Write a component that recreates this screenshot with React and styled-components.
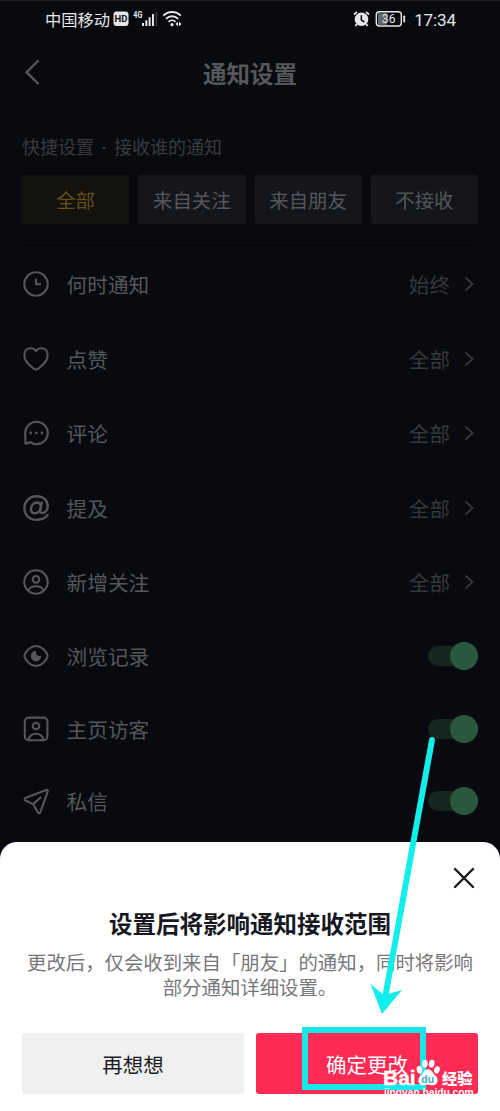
import styled, { createGlobalStyle } from "styled-components";

const GlobalStyle = createGlobalStyle`
  * {
    box-sizing: border-box;
  }

  body {
    margin: 0;
    font-family: "Noto Sans CJK SC", "Noto Sans", sans-serif;
  }
`;

const Phone = styled.div`
  position: relative;
  display: flex;
  flex-direction: column;
  width: 500px;
  height: 1111px;
  overflow: hidden;
  background: #090a0f;
  border-top: 1px solid #1b1d20;
`;

const StatusBar = styled.div`
  display: flex;
  align-items: center;
  justify-content: space-between;
  height: 36px;
  padding: 0 44px 0 45px;
  color: #e6e6e9;
  font-size: 16.3px;
  line-height: 36px;
`;

const StatusGroup = styled.div`
  display: flex;
  align-items: center;
  height: 36px;
`;

const Clock = styled.span`
  margin-left: 7px;
  padding-top: 1px;
  font-family: Roboto, "Noto Sans", sans-serif;
  font-size: 17px;
  letter-spacing: -0.1px;
`;

const NavBar = styled.div`
  display: grid;
  grid-template-columns: 40px 1fr 40px;
  align-items: center;
  height: 72px;
  padding: 0 22px;
`;

const NavTitle = styled.h1`
  margin: 0;
  color: #56575b;
  font-size: 23.5px;
  font-weight: 700;
  line-height: 34px;
  text-align: center;
`;

const SectionLabel = styled.div`
  height: 66px;
  padding: 24px 22px 0;
  color: #393a3f;
  font-size: 18px;
  line-height: 27px;
  white-space: pre;
`;

const Dot = styled.span`
  display: inline-block;
  width: 20px;
  font-family: "Noto Sans", sans-serif;
  text-align: center;
`;

const Chips = styled.div`
  display: grid;
  grid-template-columns: repeat(4, 1fr);
  gap: 9px;
  margin: 0 22px;
  padding-bottom: 18px;
  border-bottom: 1px solid #0f1015;
`;

const Chip = styled.button`
  height: 49px;
  padding: 0 0 1px;
  border: none;
  border-radius: 2px;
  background: ${(p) => (p.$active ? "#14120d" : "#15161b")};
  color: ${(p) => (p.$active ? "#64501c" : "#55565b")};
  font-family: inherit;
  font-size: 19.4px;
`;

const List = styled.div`
  padding: 4px 22px 0;
`;

const Row = styled.div`
  display: flex;
  align-items: center;
  height: ${(p) => (p.$toggle ? "72.7px" : "74.5px")};
`;

const RowIcon = styled.svg`
  width: 28px;
  height: 28px;
  fill: none;
  stroke: #55565b;
  stroke-width: 2.1;
  stroke-linecap: round;
  stroke-linejoin: round;
`;

const RowLabel = styled.span`
  flex: 1;
  margin-left: 16.5px;
  color: #55565b;
  font-size: 20.7px;
  line-height: 30px;
`;

const RowValue = styled.span`
  margin-right: 14px;
  color: #36373c;
  font-size: 20.6px;
  line-height: 30px;
`;

const Chevron = styled.svg`
  width: 10px;
  height: 16px;
  margin-right: 4px;
  fill: none;
  stroke: #36373c;
  stroke-width: 1.8;
`;

const Switch = styled.div`
  display: flex;
  align-items: center;
  justify-content: flex-end;
  width: 50px;
  height: 20px;
  border-radius: 10px;
  background: #16271f;
`;

const Knob = styled.div`
  width: 28px;
  height: 28px;
  border-radius: 50%;
  background: #2a583e;
`;

const Sheet = styled.section`
  position: absolute;
  left: 0;
  right: 0;
  bottom: 0;
  display: flex;
  flex-direction: column;
  height: 269.5px;
  padding: 0 22px;
  border-radius: 17px 17px 0 0;
  background: #fff;
`;

const CloseButton = styled.button`
  align-self: flex-end;
  height: 64px;
  padding: 11px 3px 0 0;
  border: none;
  background: none;
`;

const SheetTitle = styled.h2`
  margin: 0;
  color: #17181f;
  font-size: 23.5px;
  font-weight: 700;
  line-height: 34px;
  text-align: center;
`;

const SheetText = styled.p`
  height: 93px;
  margin: 0;
  padding-top: 9px;
  color: #77777b;
  font-size: 19.4px;
  line-height: 25.6px;
  text-align: center;
  white-space: nowrap;
`;

const Actions = styled.div`
  display: grid;
  grid-template-columns: 1fr 1fr;
  gap: 12px;
`;

const ActionButton = styled.button`
  height: 61px;
  padding: 1px 0 0;
  border: none;
  border-radius: 3px;
  background: ${(p) => (p.$primary ? "#fe2b55" : "#f0f0f0")};
  color: ${(p) => (p.$primary ? "#fff" : "#1b1c22")};
  font-family: inherit;
  font-size: 20.5px;
`;

const Highlight = styled.div`
  position: absolute;
  left: 302px;
  top: 1026px;
  width: 124px;
  height: 63px;
  border: 6px solid #1ae6ea;
`;

const Arrow = styled.svg`
  position: absolute;
  left: 360px;
  top: 729px;
  width: 90px;
  height: 290px;
`;

const Watermark = styled.div`
  position: absolute;
  left: 383px;
  top: 1056px;
  width: 92px;
  color: #fff;
  font-family: "Liberation Sans", "Noto Sans CJK SC", sans-serif;
  font-weight: 700;
`;

const Brand = styled.div`
  display: flex;
  align-items: flex-end;
  height: 30px;
  font-size: 21px;
  line-height: 19px;
`;

const BrandLatin = styled.span`
  width: 32px;
  -webkit-text-stroke: 0.4px #fff;
`;

const BrandCn = styled.span`
  margin-left: 1px;
  font-family: "Noto Sans CJK SC", sans-serif;
  font-size: 15.3px;
  font-weight: 900;
`;

const Site = styled.div`
  padding-left: 1px;
  font-size: 10.3px;
  line-height: 12px;
  letter-spacing: -0.05px;
`;

const icons = {
  clock: (
    <>
      <circle cx="14" cy="14" r="11.7" />
      <path d="M14 8.5V14.3H19" strokeLinecap="butt" />
    </>
  ),
  heart: (
    <path d="M14 24.6C12.7 24.6 2.4 18 2.4 10.2C2.4 6 5 3.2 8.5 3.2C11 3.2 13 4.4 14 6.1C15 4.4 17 3.2 19.5 3.2C23 3.2 25.6 6 25.6 10.2C25.6 18 15.3 24.6 14 24.6Z" />
  ),
  comment: (
    <>
      <path d="M3.2 14A11.3 11.2 0 1 1 14.5 25.2C12 25.2 10 24.5 8.3 23.2C6.8 24.3 5.2 24.6 3.4 24.5V20.5C3.4 18 3.2 16.5 3.2 14Z" />
      <g fill="#55565b" stroke="none">
        <circle cx="8.7" cy="14" r="1.4" />
        <circle cx="14.3" cy="14" r="1.4" />
        <circle cx="19.9" cy="14" r="1.4" />
      </g>
    </>
  ),
  mention: (
    <g strokeWidth="2.4">
      <path d="M25.6 21C23 24.2 19 25.8 14.5 25.8C7.6 25.8 2.4 21 2.4 14.2C2.4 7 7.6 2.3 14.6 2.3C21 2.3 25.7 6.1 25.7 11.8C25.7 15.8 23.5 19 20.6 19C18.6 19 17.9 17.7 18.3 15.7L19.8 8.4" />
      <path d="M18.9 12.2C18.6 9.9 17.3 8.5 15 8.5C11.6 8.5 9 11.5 9 15C9 17.6 10.4 19.3 12.8 19.3C15.7 19.3 18 17 18.7 13.8" />
    </g>
  ),
  follower: (
    <>
      <circle cx="14" cy="14" r="11.7" />
      <circle cx="14" cy="11.3" r="3.3" />
      <path d="M6.5 22C8 19.3 11 18.2 14 18.2S20 19.3 21.5 22" />
    </>
  ),
  eye: (
    <>
      <path d="M2.2 14C3.8 8.5 8.8 4 14 4S24.2 8.5 25.8 14C24.2 19.5 19.2 24 14 24S3.8 19.5 2.2 14Z" />
      <path
        d="M14 8.8A5.2 5.2 0 1 0 19.2 14C17.5 14.2 15.8 13.9 14.9 13.1C14 12.1 13.8 10.5 14 8.8Z"
        fill="#55565b"
        stroke="none"
      />
    </>
  ),
  visitor: (
    <>
      <rect x="2.8" y="2.6" width="22.6" height="22.6" rx="4" />
      <circle cx="14" cy="11" r="3.3" />
      <path d="M6.5 25C7.5 20.6 10.5 18.8 14 18.8S20.5 20.6 21.5 25" />
    </>
  ),
  message: (
    <>
      <path d="M24.3 3L3.8 10.7C2.2 11.4 2.2 13.1 3.8 13.8L11.1 17.1L15.6 25.1C16.4 26.6 18 26.4 18.5 24.9L25.7 4.6C26 3.5 25.3 2.7 24.3 3Z" />
      <path d="M11.1 17.1L18.5 10.5" />
    </>
  ),
};

const rows = [
  { icon: "clock", label: "何时通知", value: "始终" },
  { icon: "heart", label: "点赞", value: "全部" },
  { icon: "comment", label: "评论", value: "全部" },
  { icon: "mention", label: "提及", value: "全部" },
  { icon: "follower", label: "新增关注", value: "全部" },
  { icon: "eye", label: "浏览记录" },
  { icon: "visitor", label: "主页访客" },
  { icon: "message", label: "私信" },
];

const chips = ["全部", "来自关注", "来自朋友", "不接收"];

const SignalIcons = () => (
  <svg width="72" height="24" viewBox="0 0 72 24" fill="#e6e6e9">
    <rect x="3.5" y="4.5" width="15" height="14.5" rx="3" />
    <text
      x="11"
      y="15.3"
      fill="#15161a"
      fontFamily="Roboto, sans-serif"
      fontSize="9.5"
      fontWeight="700"
      textAnchor="middle"
    >
      HD
    </text>
    <text
      x="23.3"
      y="11"
      fontFamily="Roboto, sans-serif"
      fontSize="9.5"
      fontWeight="700"
      textLength="9"
      lengthAdjust="spacingAndGlyphs"
    >
      4G
    </text>
    <rect x="32" y="16" width="2" height="3" />
    <rect x="35.3" y="13.3" width="2" height="5.7" />
    <rect x="38.6" y="10.3" width="2" height="8.7" />
    <rect x="42" y="7" width="2" height="12" />
    <rect x="45.6" y="4.5" width="1.6" height="14.5" fill="#3b3c40" />
    <g fill="none" stroke="#e6e6e9" strokeWidth="1.8">
      <path d="M53.3 8.6C58.2 3.8 66 3.8 70.8 8.6" />
      <path d="M56 11.8C59.4 8.4 64.7 8.4 68.1 11.8" />
      <path d="M58.6 14.8C60.6 12.9 63.6 12.9 65.5 14.8" />
    </g>
    <circle cx="62" cy="17.7" r="1.6" />
    <path d="M65.5 17L68 14.8V19.2ZM71.6 17L69 14.8V19.2Z" />
  </svg>
);

const AlarmIcon = () => (
  <svg width="17" height="18" viewBox="0 0 17 18">
    <circle cx="8.5" cy="9.2" r="6.8" fill="#e6e6e9" />
    <path
      d="M1 4.5L4 1.8M16 4.5L13 1.8M3.8 14L2.4 16M13.2 14L14.6 16"
      stroke="#e6e6e9"
      strokeWidth="1.8"
    />
    <path
      d="M8.3 5.2V9.8L11.3 12"
      fill="none"
      stroke="#15161a"
      strokeWidth="1.6"
    />
  </svg>
);

const BatterySvg = styled.svg`
  margin-left: 5px;
`;

const BatteryIcon = () => (
  <BatterySvg width="32" height="18" viewBox="0 0 32 18">
    <rect x="3" y="3.2" width="9" height="11.6" fill="#65666b" />
    <rect
      x="1.3"
      y="1.8"
      width="25"
      height="14.2"
      rx="3"
      fill="none"
      stroke="#e6e6e9"
      strokeWidth="1.4"
    />
    <rect x="28.3" y="5.5" width="1.8" height="7" rx="0.8" fill="#e6e6e9" />
    <text
      x="13.8"
      y="13.2"
      fill="#e6e6e9"
      fontFamily="Roboto, sans-serif"
      fontSize="12"
      textAnchor="middle"
    >
      36
    </text>
  </BatterySvg>
);

const Paw = () => (
  <svg width="26" height="29" viewBox="0 0 27 29" fill="#fff">
    <ellipse cx="4.6" cy="11.6" rx="2.9" ry="3.9" transform="rotate(-12 4.6 11.6)" />
    <ellipse cx="10.3" cy="5.3" rx="2.9" ry="4.1" />
    <ellipse cx="17.3" cy="5.3" rx="2.9" ry="4.1" transform="rotate(10 17.3 5.3)" />
    <ellipse cx="22.8" cy="11.8" rx="2.9" ry="3.8" transform="rotate(15 22.8 11.8)" />
    <path d="M13.5 11C17.5 11 18.5 15.5 21.5 18C24.8 20.8 24 27.5 19 27.7C16.5 27.8 15.5 27.2 13.5 27.2S10.2 27.8 8 27.7C2.8 27.5 2.2 21 5.6 18C8.6 15.4 9.5 11 13.5 11Z" />
    <text
      x="13.2"
      y="25"
      fill="#43aebf"
      fontFamily="Liberation Sans, sans-serif"
      fontSize="11"
      fontWeight="700"
      textAnchor="middle"
    >
      du
    </text>
  </svg>
);

const App = () => {
  return (
    <>
      <GlobalStyle />
      <Phone>
        <StatusBar>
          <StatusGroup>
            中国移动
            <SignalIcons />
          </StatusGroup>
          <StatusGroup>
            <AlarmIcon />
            <BatteryIcon />
            <Clock>17:34</Clock>
          </StatusGroup>
        </StatusBar>

        <NavBar>
          <svg width="20" height="28" viewBox="0 0 20 28" fill="none">
            <path
              d="M16.5 1.5L4.5 13.2L16.5 25"
              stroke="#55565b"
              strokeWidth="2.4"
            />
          </svg>
          <NavTitle>通知设置</NavTitle>
        </NavBar>

        <SectionLabel>
          快捷设置<Dot>·</Dot>接收谁的通知
        </SectionLabel>
        <Chips>
          {chips.map((name, i) => (
            <Chip key={name} $active={i === 0}>
              {name}
            </Chip>
          ))}
        </Chips>

        <List>
          {rows.map(({ icon, label, value }) => (
            <Row key={label} $toggle={!value}>
              <RowIcon viewBox="0 0 28 28">{icons[icon]}</RowIcon>
              <RowLabel>{label}</RowLabel>
              {value ? (
                <>
                  <RowValue>{value}</RowValue>
                  <Chevron viewBox="0 0 10 16">
                    <path d="M1.5 1.5L8.5 8L1.5 14.5" />
                  </Chevron>
                </>
              ) : (
                <Switch>
                  <Knob />
                </Switch>
              )}
            </Row>
          ))}
        </List>

        <Sheet>
          <CloseButton aria-label="关闭">
            <svg width="22" height="22" viewBox="0 0 22 22" fill="none">
              <path
                d="M2 2L20 20M20 2L2 20"
                stroke="#17181f"
                strokeWidth="2.4"
                strokeLinecap="round"
              />
            </svg>
          </CloseButton>
          <SheetTitle>设置后将影响通知接收范围</SheetTitle>
          <SheetText>
            更改后，仅会收到来自「朋友」的通知，同时将影响
            <br />
            部分通知详细设置。
          </SheetText>
          <Actions>
            <ActionButton>再想想</ActionButton>
            <ActionButton $primary>确定更改</ActionButton>
          </Actions>
        </Sheet>

        <Highlight />
        <Arrow viewBox="0 0 90 290">
          <path
            d="M72 10L25 268"
            stroke="#12eeea"
            strokeWidth="6"
            strokeLinecap="round"
          />
          <path d="M22 284L10.5 254L24 265L42 260Z" fill="#12eeea" />
        </Arrow>
        <Watermark>
          <Brand>
            <BrandLatin>Bai</BrandLatin>
            <Paw />
            <BrandCn>经验</BrandCn>
          </Brand>
          <Site>jingyan.baidu.com</Site>
        </Watermark>
      </Phone>
    </>
  );
};

export default App;
